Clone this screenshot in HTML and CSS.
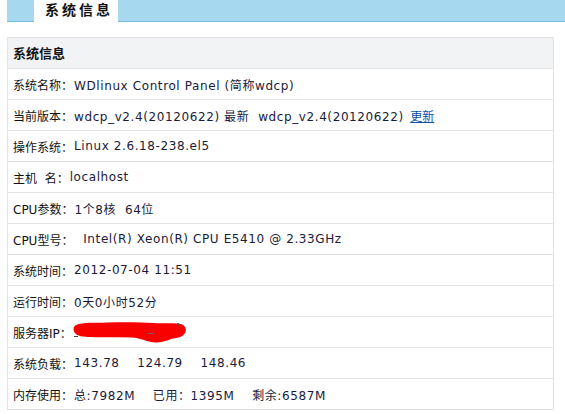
FILE: index.html
```html
<!DOCTYPE html>
<html lang="zh-CN">
<head>
<meta charset="utf-8">
<title>系统信息</title>
<link rel="stylesheet" href="styles.css">
</head>
<body>
<div class="page">
  <div class="tabbar">
    <div class="tab">系统信息</div>
  </div>
  <div class="panel">
    <div class="panel-head">系统信息</div>
    <div class="row">系统名称：<span class="v">WDlinux Control Panel (简称wdcp)</span></div>
    <div class="row">当前版本：<span class="v">wdcp_v2.4(20120622) 最新&nbsp; wdcp_v2.4(20120622) </span><a class="link" href="#">更新</a></div>
    <div class="row">操作系统：<span class="v">Linux 2.6.18-238.el5</span></div>
    <div class="row">主机&nbsp; 名：<span class="v">localhost</span></div>
    <div class="row">CPU参数：<span class="v">1个8核&nbsp; 64位</span></div>
    <div class="row">CPU型号：<span class="v">&nbsp; Intel(R) Xeon(R) CPU E5410 @ 2.33GHz</span></div>
    <div class="row">系统时间：<span class="v">2012-07-04 11:51</span></div>
    <div class="row">运行时间：<span class="v">0天0小时52分</span></div>
    <div class="row">服务器IP：<svg class="redact" width="114" height="22" viewBox="0 0 114 22"><path d="M3 4 C10 1 22 2 34 1.5 C50 1 66 1 80 2 C92 2.5 102 1.5 108 3 C113 5 114 9 112 12 C110 16 104 17 98 18 C92 21 84 22 78 21 C72 20 68 17 58 16.5 C44 16 30 16.5 18 16 C10 16 4 15 2 12 C0 9 0 6 3 4 Z" fill="#f80000"/><rect x="1" y="15" width="4" height="1" fill="#444"/><rect x="75" y="12" width="6" height="1" fill="#666"/><rect x="104" y="2" width="2" height="2" fill="#555"/></svg></div>
    <div class="row">系统负载：<span class="v">143.78&nbsp;&nbsp;&nbsp; 124.79&nbsp;&nbsp;&nbsp; 148.46</span></div>
    <div class="row">内存使用：<span class="v">总:7982M&nbsp;&nbsp;&nbsp; 已用：1395M&nbsp;&nbsp;&nbsp; 剩余:6587M</span></div>
  </div>
</div>
</body>
</html>
```
FILE: styles.css
```css
html, body {
  margin: 0;
  padding: 0;
  background: #fff;
}
.page {
  padding-left: 7px;
  font-family: "DejaVu Sans", "Noto Sans CJK SC", sans-serif;
  font-size: 12px;
  color: #111;
}
.tabbar {
  height: 21px;
  background: #a6d9ef;
  border-bottom: 1px solid #7bbbe0;
  padding-left: 27px;
  display: flex;
}
.tab {
  width: 84px;
  height: 22px;
  background: #fff;
  box-sizing: border-box;
  padding-left: 11px;
  font-family: "Noto Sans CJK SC", sans-serif;
  font-weight: bold;
  font-size: 14px;
  letter-spacing: 3px;
  line-height: 18px;
  color: #111;
}
.panel {
  margin-top: 15px;
  margin-right: 11px;
  border: 1px solid #e2e3e7;
  border-bottom: none;
}
.panel-head {
  height: 30px;
  line-height: 30px;
  background: #f2f3f5;
  border-bottom: 1px solid #e2e3e7;
  padding-left: 5px;
  font-family: "Noto Sans CJK SC", sans-serif;
  font-weight: bold;
  font-size: 13px;
  color: #111;
}
.row {
  height: 30px;
  border-bottom: 1px solid #e2e3e7;
  padding-left: 5px;
  display: flex;
  align-items: center;
  white-space: pre;
}
.v {
  color: #1a1a3a;
  letter-spacing: 0.6px;
  margin-left: 1px;
}
.link {
  color: #0b4fa8;
  text-decoration: underline;
  margin-left: 2px;
}
.redact {
  display: block;
  margin-left: 1px;
}
```
